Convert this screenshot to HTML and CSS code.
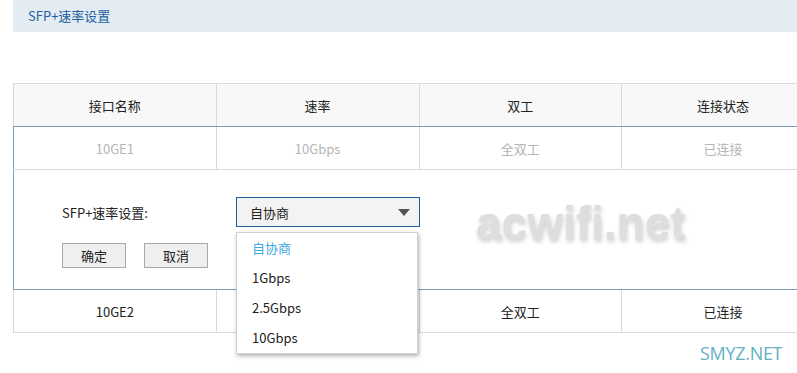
FILE: index.html
```html
<!DOCTYPE html>
<html lang="zh-CN">
<head>
    <meta charset="UTF-8">
    <title>SFP+速率设置</title>
    <link rel="stylesheet" href="styles.css">
</head>
<body>
    <div class="title-bar">SFP+速率设置</div>

    <table class="port-table">
        <thead>
            <tr>
                <th>接口名称</th>
                <th>速率</th>
                <th>双工</th>
                <th>连接状态</th>
            </tr>
        </thead>
        <tbody>
            <tr class="row-editing">
                <td>10GE1</td>
                <td>10Gbps</td>
                <td>全双工</td>
                <td>已连接</td>
            </tr>
            <tr class="edit-row">
                <td colspan="4">
                    <div class="edit-form">
                        <div class="form-line">
                            <label class="form-label">SFP+速率设置:</label>
                            <div class="select-wrap">
                                <div class="select-box">
                                    <span>自协商</span>
                                    <span class="arrow"></span>
                                </div>
                                <ul class="dropdown">
                                    <li class="active">自协商</li>
                                    <li>1Gbps</li>
                                    <li>2.5Gbps</li>
                                    <li>10Gbps</li>
                                </ul>
                            </div>
                        </div>
                        <div class="btn-line">
                            <button class="btn">确定</button>
                            <button class="btn">取消</button>
                        </div>
                    </div>
                </td>
            </tr>
            <tr>
                <td>10GE2</td>
                <td></td>
                <td>全双工</td>
                <td>已连接</td>
            </tr>
        </tbody>
    </table>

    <div class="watermark">acwifi.net</div>
    <div class="site-mark">SMYZ.NET</div>
</body>
</html>
```

FILE: styles.css
```css
html, body {
    margin: 0;
    padding: 0;
    background: #fff;
    overflow: hidden;
}

body {
    position: relative;
    width: 797px;
    height: 373px;
    font-family: "Noto Sans CJK SC", sans-serif;
    font-size: 13px;
    color: #222;
}

.title-bar {
    margin-left: 13px;
    width: 800px;
    height: 32px;
    line-height: 32px;
    padding-left: 15px;
    background-color: #e3ebf3;
    color: #25629e;
}

.port-table {
    margin: 51px 0 0 13px;
    width: 812px;
    border-collapse: collapse;
    table-layout: fixed;
}

.port-table th,
.port-table td {
    height: 42px;
    padding: 0;
    text-align: center;
    font-weight: normal;
    border: 1px solid #dadada;
}

.port-table th {
    background-color: #f8f8f8;
    color: #222;
    border-bottom: 1px solid #7d9dbd;
}

.row-editing td {
    color: #b5b5b5;
}

.row-editing td:first-child,
.edit-row td {
    border-left: 1px solid #7d9dbd;
}

.edit-row td {
    height: auto;
    text-align: left;
    border-bottom: 1px solid #7d9dbd;
}

.edit-form {
    padding: 27px 0 21px 48px;
}

.form-line {
    display: flex;
    align-items: center;
}

.form-label {
    width: 174px;
}

.select-wrap {
    position: relative;
}

.select-box {
    box-sizing: border-box;
    width: 184px;
    height: 30px;
    padding: 0 9px 0 13px;
    display: flex;
    align-items: center;
    justify-content: space-between;
    border: 1px solid #1d5f9d;
    background-color: #f3f3f3;
}

.arrow {
    width: 0;
    height: 0;
    border-left: 6px solid transparent;
    border-right: 6px solid transparent;
    border-top: 7px solid #555;
}

.dropdown {
    position: absolute;
    top: 35px;
    left: 0;
    z-index: 5;
    box-sizing: border-box;
    width: 182px;
    margin: 0;
    padding: 0;
    list-style: none;
    background: #fff;
    border: 1px solid #d0d0d0;
    box-shadow: 1px 2px 4px rgba(0, 0, 0, 0.3);
}

.dropdown li {
    height: 30px;
    line-height: 30px;
    padding-left: 15px;
    color: #222;
}

.dropdown li.active {
    color: #3fa9df;
}

.btn-line {
    display: flex;
    gap: 18px;
    margin-top: 16px;
}

.btn {
    box-sizing: border-box;
    width: 64px;
    height: 25px;
    padding: 0;
    font-family: inherit;
    font-size: 13px;
    color: #222;
    background-color: #efefef;
    border: 1px solid #a8a8a8;
}

.watermark {
    position: absolute;
    left: 476px;
    top: 196px;
    font-family: "Liberation Sans", sans-serif;
    font-weight: bold;
    font-size: 46px;
    color: #dedede;
    text-shadow: 1px 3px 4px #cfcfcf;
}

.site-mark {
    position: absolute;
    left: 700px;
    top: 341px;
    font-family: "Open Sans", sans-serif;
    font-size: 18px;
    letter-spacing: -0.3px;
    color: #64b0c2;
}
```
